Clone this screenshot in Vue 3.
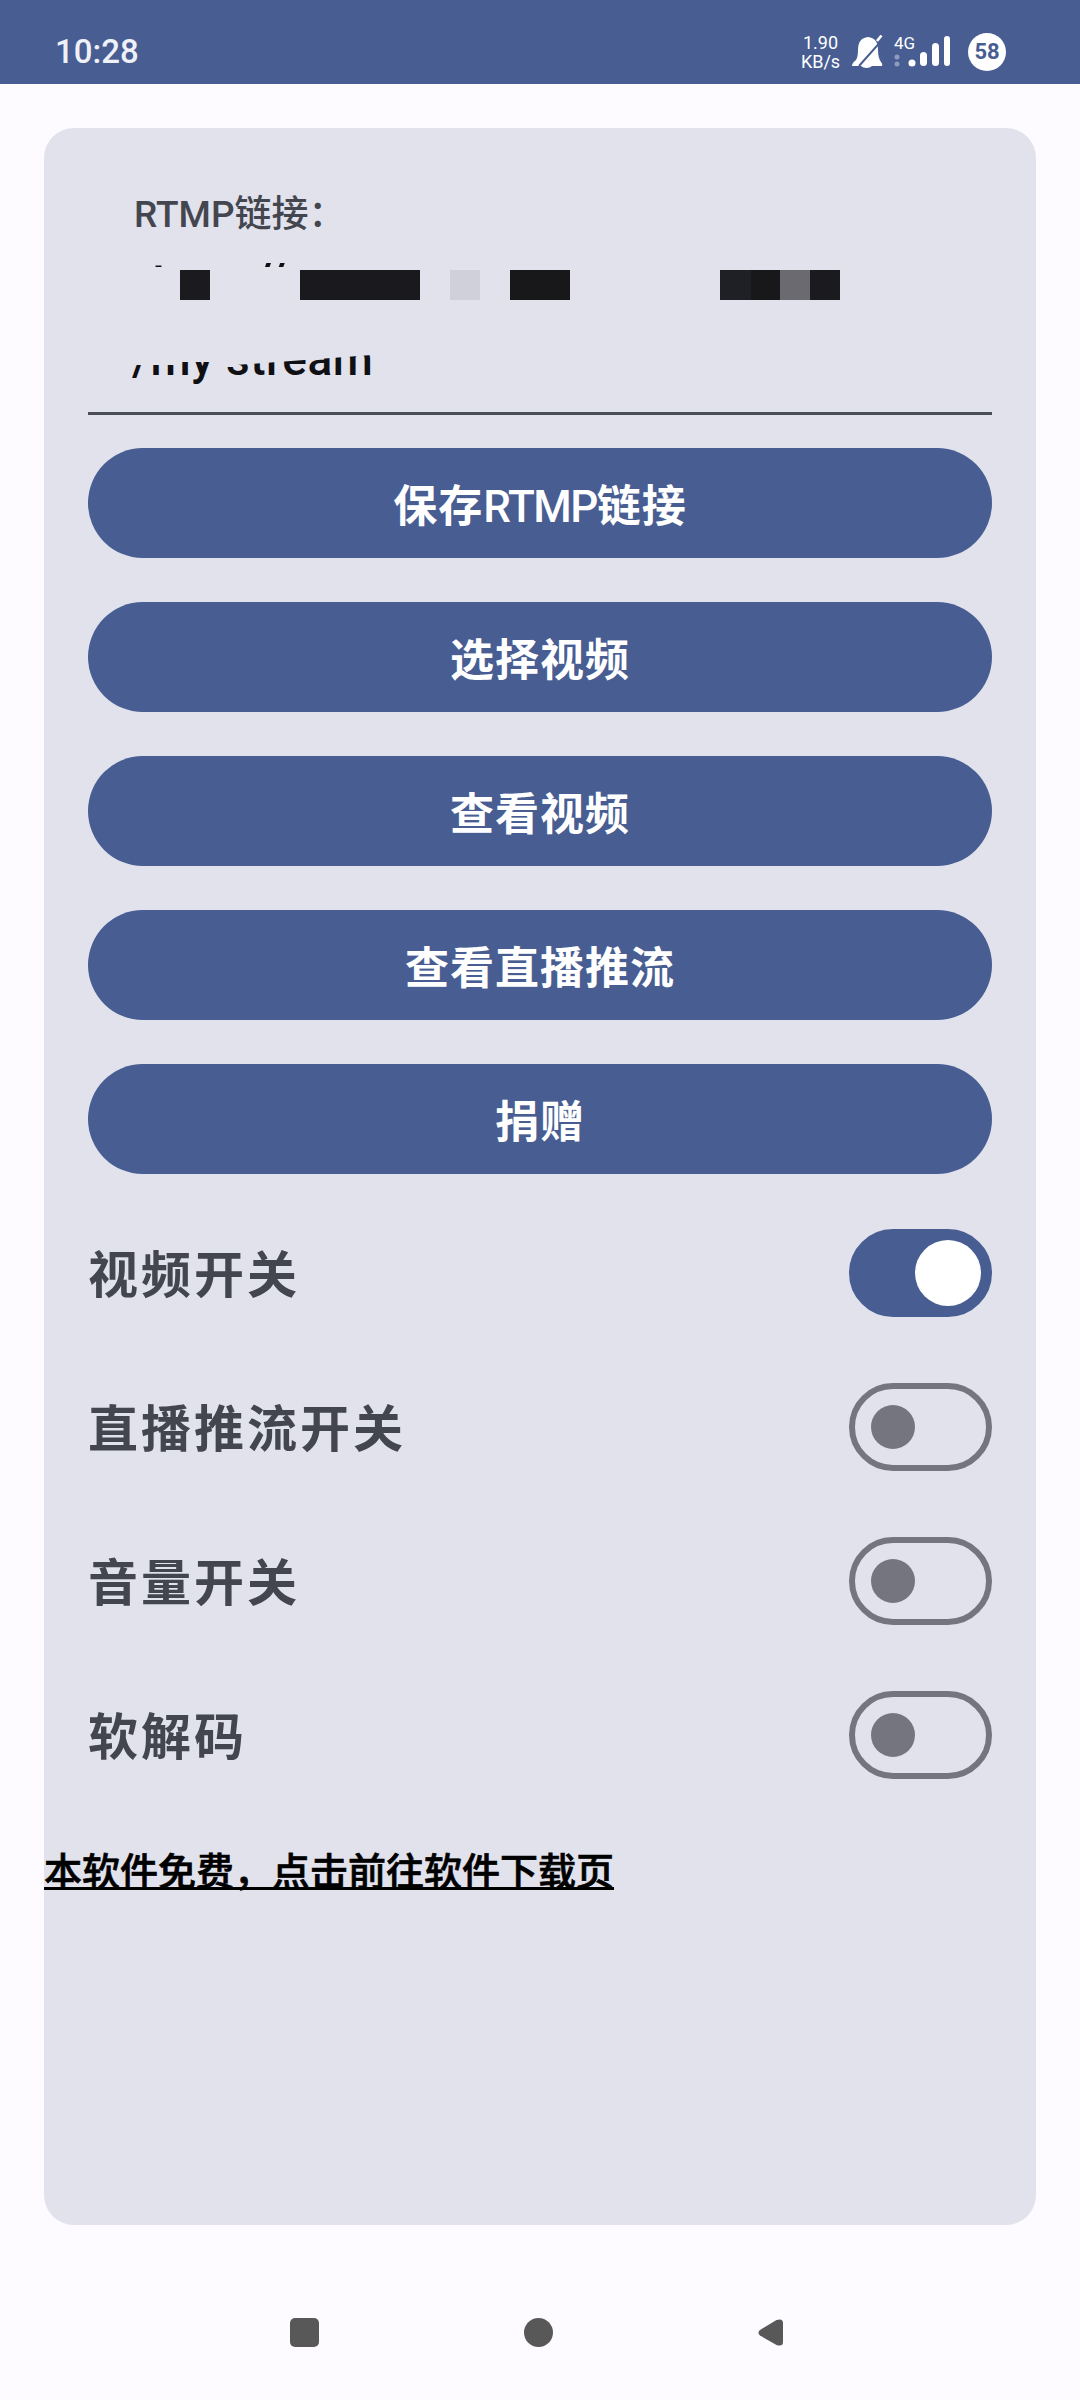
<script setup>
const buttons = ['保存RTMP链接', '选择视频', '查看视频', '查看直播推流', '捐赠'].map((t) => t.split(/(RTMP)/))
const switches = [
  { label: '视频开关', on: true },
  { label: '直播推流开关', on: false },
  { label: '音量开关', on: false },
  { label: '软解码', on: false },
]
const blocks = [
  { w: 30, gap: 90, c: '#1a1a1f' },
  { w: 120, gap: 30, c: '#1a1a1e' },
  { w: 30, gap: 30, c: '#d0d0da' },
  { w: 60, gap: 150, c: '#18181b' },
  { w: 31, gap: 0, c: '#1f2025' },
  { w: 29, gap: 0, c: '#18181b' },
  { w: 30, gap: 0, c: '#6a6a70' },
  { w: 30, gap: 0, c: '#1a1a1f' },
]
</script>

<template>
  <div class="page">
    <header class="status">
      <span class="time">10:28</span>
      <div class="status-right">
        <div class="speed"><span>1.90</span><span>KB/s</span></div>
        <svg class="bell" width="32" height="34" viewBox="0 0 32 34">
          <path d="M1 31 Q1 28 5 25 Q7 22 7 15 Q7 3 17 2 Q27 3 27 15 Q27 23 30 27 Q32 29 31 31 L21 31 Q19 33 15.500 33 Q12 33 10 31 Z" fill="#fff"/>
          <path d="M33 3 L8 31" stroke="#485d92" stroke-width="2" fill="none"/>
          <path d="M30.500 0.500 L26 6" stroke="#fff" stroke-width="2.600" fill="none"/>
        </svg>
        <div class="net">
          <span class="g">4G</span>
          <svg width="56" height="34" viewBox="0 0 56 34">
            <circle cx="3" cy="22" r="2.500" fill="#8d9dc2"/>
            <circle cx="3" cy="29" r="2.500" fill="#8d9dc2"/>
            <circle cx="18" cy="28" r="3.500" fill="#fff"/>
            <rect x="26" y="17" width="7" height="14" rx="3.500" fill="#fff"/>
            <rect x="38" y="8" width="7" height="23" rx="3.500" fill="#fff"/>
            <rect x="50" y="1" width="6" height="30" rx="3" fill="#fff"/>
          </svg>
        </div>
        <span class="badge">58</span>
      </div>
    </header>

    <main class="card">
      <div class="rtmp">
        <div class="rtmp-label">RTMP链接：</div>
        <div class="rtmp-tops">rtmp://</div>
        <div class="redact">
          <i v-for="(b, i) in blocks" :key="i" :style="{ width: b.w + 'px', marginRight: b.gap + 'px', background: b.c }"></i>
        </div>
        <div class="rtmp-tail">/my stream</div>
      </div>
      <div class="rule"></div>

      <div class="buttons">
        <button v-for="b in buttons" :key="b.join('')" class="btn">
          <template v-for="(part, i) in b" :key="i">
            <span v-if="part === 'RTMP'" class="latin">{{ part }}</span>
            <template v-else>{{ part }}</template>
          </template>
        </button>
      </div>

      <div class="switches">
        <div v-for="s in switches" :key="s.label" class="row">
          <span class="row-label">{{ s.label }}</span>
          <span class="sw" :class="{ on: s.on }"><i></i></span>
        </div>
      </div>

      <a class="link">本软件免费，点击前往软件下载页</a>
    </main>

    <nav class="navbar">
      <svg class="nav-square" width="29" height="29" viewBox="0 0 29 29"><rect width="29" height="29" rx="5" fill="#585858"/></svg>
      <svg class="nav-circle" width="29" height="29" viewBox="0 0 29 29"><circle cx="14.500" cy="14.500" r="14.500" fill="#585858"/></svg>
      <svg class="nav-back" width="25" height="27" viewBox="0 0 25 27"><path d="M18.500 1 Q25 -1 25 4 L25 23 Q25 28 18.500 26 L2 16.500 Q-1 13.500 2 11 Z" fill="#585858"/></svg>
    </nav>
  </div>
</template>

<style>
html, body { margin: 0; background: #fdfbff; }
</style>

<style scoped>
.page {
  width: 1080px;
  height: 2400px;
  display: flex;
  flex-direction: column;
  background: #fdfbff;
  font-family: Roboto, "Noto Sans CJK SC", sans-serif;
  overflow: hidden;
}
.status {
  height: 84px;
  flex: none;
  background: #485d92;
  color: #eef1f8;
  display: flex;
  align-items: center;
  justify-content: space-between;
  padding: 19px 74px 0 55px;
  box-sizing: border-box;
}
.time { font-size: 33px; font-weight: 500; color: #eef1f8; }
.status-right { display: flex; align-items: center; }
.speed {
  display: flex;
  flex-direction: column;
  align-items: center;
  width: 37px;
  font-size: 18px;
  line-height: 19px;
  color: #fff;
  margin-right: 12px;
}
.bell { margin-right: 11px; }
.net { position: relative; width: 56px; height: 34px; margin-right: 18px; }
.net svg { display: block; }
.g { position: absolute; left: 0; top: -1px; font-size: 17px; line-height: 18px; color: #fff; }
.badge {
  width: 38px;
  height: 38px;
  border-radius: 50%;
  background: #fff;
  color: #485d92;
  font-size: 22px;
  font-weight: 700;
  display: flex;
  align-items: center;
  justify-content: center;
}
.card {
  margin: 44px 44px 0;
  height: 2097px;
  flex: none;
  box-sizing: border-box;
  background: #e1e2ec;
  border-radius: 30px;
  padding: 0 44px;
}
.rtmp { height: 284px; padding-left: 46px; position: relative; overflow: hidden; }
.rtmp-label {
  padding-top: 65px;
  font-size: 37px;
  line-height: 44px;
  color: #44464f;
  font-weight: 500;
}
.rtmp-tops {
  position: absolute;
  left: 44px;
  top: 129px;
  height: 10px;
  overflow: hidden;
  font-size: 50px;
  line-height: 50px;
  color: #101014;
  font-weight: 500;
}
.redact { position: absolute; left: 92px; top: 142px; height: 30px; display: flex; }
.redact i { display: block; height: 30px; }
.rtmp-tail {
  position: absolute;
  left: 44px;
  top: 206px;
  width: 300px;
  height: 60px;
  font-size: 46px;
  line-height: 50px;
  letter-spacing: 0.5px;
  color: #101014;
  font-weight: 500;
  clip-path: polygon(0 31px, 48px 31px, 50px 28px, 80px 28px, 90px 32px, 240px 21px, 300px 21px, 300px 60px, 0 60px);
}
.rule { height: 3px; background: #4b4d58; }
.buttons { padding-top: 33px; display: flex; flex-direction: column; gap: 44px; }
.btn {
  display: block;
  height: 110px;
  width: 100%;
  border: 0;
  padding: 0;
  border-radius: 55px;
  background: #485d92;
  color: #fff;
  font-family: inherit;
  font-size: 44px;
  font-weight: 700;
  letter-spacing: 1px;
}
.latin { letter-spacing: -1.5px; font-weight: 500; }
.switches { padding-top: 55px; display: flex; flex-direction: column; gap: 66px; }
.row { height: 88px; display: flex; align-items: center; justify-content: space-between; }
.row-label { font-size: 50px; font-weight: 700; letter-spacing: 3px; color: #44464f; position: relative; top: -2px; }
.sw {
  width: 143px;
  height: 88px;
  box-sizing: border-box;
  border: 6px solid #74757f;
  border-radius: 44px;
  position: relative;
  display: block;
}
.sw i {
  position: absolute;
  left: 16px;
  top: 16px;
  width: 44px;
  height: 44px;
  border-radius: 50%;
  background: #74757f;
}
.sw.on { background: #485d92; border-color: #485d92; }
.sw.on i { left: 60px; top: 5px; width: 66px; height: 66px; background: #fff; }
.link {
  display: block;
  width: max-content;
  margin: 69px 0 0 -44px;
  font-size: 38px;
  line-height: 48px;
  font-weight: 500;
  -webkit-text-stroke: 0.7px #000;
  color: #000;
  text-decoration: underline;
  text-decoration-thickness: 3px;
}
.navbar {
  flex: 1;
  display: flex;
  align-items: flex-start;
  padding: 93px 0 0 290px;
}
.nav-circle { margin-left: 205px; }
.nav-back { margin: 1px 0 0 205px; }
</style>
